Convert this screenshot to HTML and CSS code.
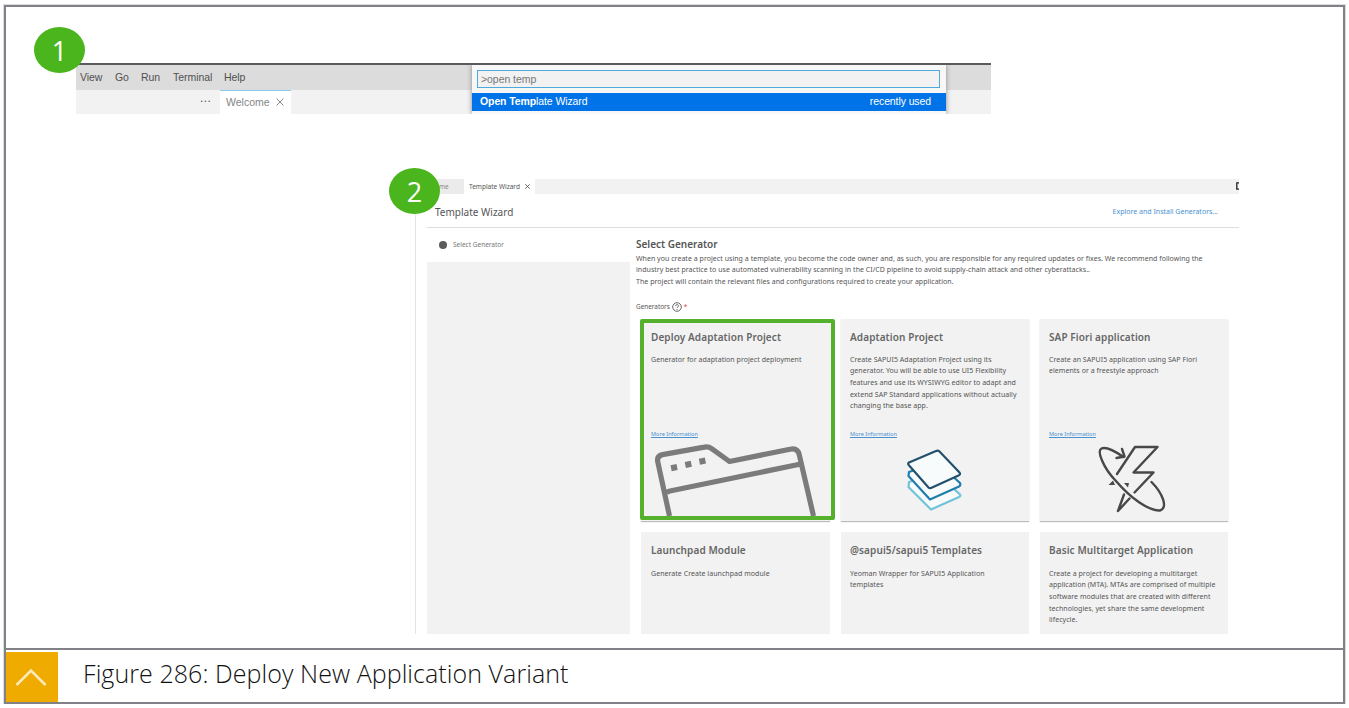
FILE: index.html
```
<!DOCTYPE html>
<html lang="en">
<head>
<meta charset="utf-8">
<title>Deploy New Application Variant</title>
<link rel="stylesheet" href="styles.css">
</head>
<body>
<figure class="frame">
  <div class="stage">
    <section class="ide">
      <span class="badge badge-one">1</span>
      <nav class="menubar"><span class="m-view">View</span><span class="m-go">Go</span><span class="m-run">Run</span><span class="m-term">Terminal</span><span class="m-help">Help</span></nav>
      <div class="tabs">
        <span class="dots">•••</span>
        <span class="tab"><span>Welcome</span><svg width="8" height="8" viewBox="0 0 8 8"><path d="M.6.6l6.8 6.8M7.4.6L.6 7.4" stroke="#858585" fill="none"/></svg></span>
      </div>
      <div class="palette">
        <div class="query">&gt;open temp</div>
        <div class="option"><span><b>Open Temp</b>late Wizard</span><span>recently used</span></div>
      </div>
    </section>

    <section class="wizard">
      <span class="badge badge-two">2</span>
      <div class="wtabs">
        <span class="wtab-old">me</span>
        <span class="wtab"><span>Template Wizard</span><svg width="5" height="5" viewBox="0 0 5 5"><path d="M.3.3l4.4 4.4M4.7.3L.3 4.7" stroke="#444" stroke-width=".8" fill="none"/></svg></span>
        <svg class="split" width="3" height="8" viewBox="0 0 3 8"><path d="M3 .8H.8v6.4H3" stroke="#222" stroke-width="1.3" fill="none"/></svg>
      </div>
      <header class="whead"><h1>Template Wizard</h1><a>Explore and Install Generators...</a></header>
      <div class="wbody">
        <aside class="side">
          <div class="step"><i></i><span>Select Generator</span></div>
          <div class="fill"></div>
        </aside>
        <main class="main">
          <h2>Select Generator</h2>
          <p class="intro">When you create a project using a template, you become the code owner and, as such, you are responsible for any required updates or fixes. We recommend following the<br>industry best practice to use automated vulnerability scanning in the CI/CD pipeline to avoid supply-chain attack and other cyberattacks..<br>The project will contain the relevant files and configurations required to create your application.</p>
          <div class="label"><span>Generators</span><svg width="10" height="10" viewBox="0 0 10 10"><circle cx="5" cy="5" r="4.3" fill="none" stroke="#555" stroke-width=".9"/><path d="M3.6 4.1c0-2 2.9-1.9 2.9-.2 0 1.1-1.5 1.1-1.5 2.2M5 7v.9" fill="none" stroke="#555" stroke-width=".9"/></svg><em>*</em></div>
          <div class="cards">
            <article class="card selected">
              <h3>Deploy Adaptation Project</h3>
              <p>Generator for adaptation project deployment</p>
              <a>More Information</a>
              <svg class="art" width="189" height="202" viewBox="641 319 189 202"><g fill="none" stroke="#7b7b7b" stroke-width="5.2" stroke-linejoin="round"><path d="M669.5 516L657.8 462Q656.5 456 662.5 454.6L703 447.4Q708 446 712 448.8L729.5 461.5L790 449.2Q797.5 447.5 799.2 454.5L813.500 516"/><path d="M666.5 492.500Q668 491.500 670 491L796 465Q799 464 801 464.5"/></g><g fill="#7b7b7b"><path d="M670.5 465.3l6-1.2 1.2 6-6 1.2zM684.7 462l6-1.2 1.2 6-6 1.2zM698.8 458.8l6-1.2 1.2 6-6 1.2z"/></g></svg>
            </article>
            <article class="card">
              <h3>Adaptation Project</h3>
              <p>Create SAPUI5 Adaptation Project using its<br>generator. You will be able to use UI5 Flexibility<br>features and use its WYSIWYG editor to adapt and<br>extend SAP Standard applications without actually<br>changing the base app.</p>
              <a>More Information</a>
              <svg class="art" width="188" height="202" viewBox="841 319 188 202"><g fill="#f8fbfc" stroke-width="2.2" stroke-linejoin="round"><path stroke="#70c3d8" d="M909 482L937 473L960 494.5Q961 496 959 497L931 509.5L908.5 487Z"/><path stroke="#207dac" d="M909 472L937 462L960 483Q961 485.5 959 486.5L930 499.5L908.5 476Z"/><path stroke="#22506d" d="M909 462.5L936 451Q938 450 939.5 451.5L959.5 472.5Q961 474.5 958.5 475.5L931 488Q929.5 488.5 928.5 487.5L908.7 465Q907.5 463.5 909 462.5Z"/></g></svg>
            </article>
            <article class="card">
              <h3>SAP Fiori application</h3>
              <p>Create an SAPUI5 application using SAP Fiori<br>elements or a freestyle approach</p>
              <a>More Information</a>
              <svg class="art" width="188" height="202" viewBox="1039.500 319 188 202"><g fill="none" stroke="#484848" stroke-width="2.4" stroke-linecap="round" stroke-linejoin="round"><path d="M1116.5 474L1134.5 447H1157L1133 472.5H1153L1134 492.5"/><path d="M1123.5 494.5L1117.5 511L1129 498.5"/><path d="M1123 457Q1107 446 1101 448.5C1096 451 1103 468 1115 480.5C1130 498 1148 511 1159.500 510.500C1168 508 1162 493 1151 482"/><path d="M1121.500 449L1124 456.500L1116 458"/></g><path fill="#484848" d="M1108 485l4.500-4.500 2 4.500zM1123.500 483h5l-1 4.500z"/></svg>
            </article>
            <article class="card short">
              <h3>Launchpad Module</h3>
              <p>Generate Create launchpad module</p>
            </article>
            <article class="card short">
              <h3>@sapui5/sapui5 Templates</h3>
              <p>Yeoman Wrapper for SAPUI5 Application<br>templates</p>
            </article>
            <article class="card short">
              <h3>Basic Multitarget Application</h3>
              <p>Create a project for developing a multitarget<br>application (MTA). MTAs are comprised of multiple<br>software modules that are created with different<br>technologies, yet share the same development<br>lifecycle.</p>
            </article>
          </div>
        </main>
      </div>
    </section>
  </div>
  <figcaption><span class="up"><svg width="52" height="50" viewBox="0 0 52 50"><path d="M10.500 33L25 18.500L39.500 33" fill="none" stroke="#fce9b8" stroke-width="2.600"/></svg></span><span class="caption">Figure 286: Deploy New Application Variant</span></figcaption>
</figure>
</body>
</html>
```
FILE: styles.css
```
*, *::after { box-sizing: border-box; }
body { margin: 0; background: #fff; overflow: hidden; font-family: "Noto Sans", sans-serif; color: #555; }
h1, h2, h3, p, figure { margin: 0; font-weight: 400; }
svg { display: block; flex: none; }
.frame { width: 1341px; height: 699px; margin: 5px 0 0 4px; border: 2px solid #828187; box-shadow: 0 0 0 1px #dcdce0; display: flex; flex-direction: column; white-space: nowrap; }
.stage { height: 643px; flex: none; border-bottom: 2px solid #828187; padding: 56px 0 0 70px; }

.badge { position: absolute; z-index: 2; width: 51px; height: 46px; border-radius: 50%; background: #4ab51c; color: #fff; font: 27px/47px "Open Sans", sans-serif; text-align: center; }
.badge-one { left: -42px; top: -38px; }
.badge-two { left: -27px; top: -11px; }

.ide { position: relative; width: 915px; height: 51px; border-top: 2px solid #5b595e; font: 10.500px/24px "Liberation Sans", sans-serif; color: #505050; }
.menubar { height: 25px; background: #dcdcdc; padding-left: 4px; display: flex; line-height: 24px; letter-spacing: -.05px; }
.m-view { width: 35px; } .m-go { width: 26px; } .m-run { width: 32px; } .m-term { width: 51px; }
.tabs { height: 24px; background: #f2f2f2; display: flex; }
.dots { width: 144px; padding: 0 8px 0 0; text-align: right; font-size: 5px; letter-spacing: 2px; line-height: 23px; }
.tab { width: 71px; background: #fff; border-top: 1px solid #8ccaea; display: flex; align-items: center; gap: 6px; padding: 0 0 1px 6px; color: #858585; }
.palette { position: absolute; left: 396px; top: 0; width: 474px; height: 49px; background: #f7f7f7; box-shadow: 0 0 5px #888; clip-path: inset(0 -6px 0 -6px); padding-top: 5px; }
.query { margin: 0 6px 5px 5px; height: 18px; border: 1px solid #4fa9dc; background: #f2f2f2; line-height: 16px; padding-left: 3px; color: #777; letter-spacing: -.05px; }
.option { height: 18px; background: #0073e8; color: #fff; line-height: 17px; display: flex; justify-content: space-between; padding: 0 15px 0 8px; letter-spacing: -.1px; }

.wizard { position: relative; margin: 65px 0 0 339px; width: 824px; height: 455px; padding-left: 11px; border-left: 1px solid #e4e4e4; }
.wtabs { height: 15px; background: #f2f2f2; display: flex; align-items: center; font-size: 6.500px; }
.wtab-old { width: 37px; height: 15px; padding-left: 12px; background: #ebebeb; line-height: 15px; color: #888; }
.wtab { width: 71px; height: 15px; background: #fff; display: flex; align-items: center; gap: 5px; padding-left: 5px; line-height: 14px; }
.split { margin: 0 0 2px auto; }
.whead { height: 34px; border-bottom: 1px solid #ddd; display: flex; justify-content: space-between; align-items: center; padding: 2px 21px 0 8px; }
h1 { font-size: 10px; }
.whead a { font-size: 7px; color: #4a91d0; }
.wbody { display: flex; height: 406px; }
.side { width: 203px; display: flex; flex-direction: column; }
.step { height: 34px; display: flex; align-items: center; gap: 6px; padding: 0 0 1px 12px; font-size: 6.500px; color: #777; }
.step i { width: 8px; height: 8px; border-radius: 50%; background: #5b5b5b; }
.fill { flex: 1; background: #f2f2f2; }
.main { padding: 8px 0 0 6px; }
h2 { font-size: 10px; line-height: 16px; font-weight: 600; }
.intro { font-size: 7px; line-height: 11.600px; letter-spacing: .038px; padding-top: .5px; }
.label { height: 12px; margin-top: 13.500px; display: flex; align-items: center; gap: 2px; font-size: 6.400px; }
.label em { font-style: normal; color: #e04040; }
.cards { margin: 6px 0 0 5px; display: grid; grid-template-columns: 189px 188px 188px; grid-template-rows: 202px 102px; column-gap: 11px; row-gap: 11px; }
.card { position: relative; background: #f2f2f2; box-shadow: 0 1px 1px #bbb; padding: 11px 0 0 9px; }
.card:first-child, .card:nth-child(4) { padding-left: 10px; }
.short { box-shadow: none; }
h3 { font-size: 10px; line-height: 15px; font-weight: 600; color: #666; letter-spacing: .1px; }
.card p { margin-top: 9px; height: 76px; font-size: 7px; line-height: 11.600px; letter-spacing: .045px; }
.short p { margin-top: 10px; }
.card a { display: block; font-size: 5.600px; line-height: 9px; color: #4a91d0; text-decoration: underline; }
.art { position: absolute; left: 0; top: 0; }
.selected::after { content: ""; position: absolute; left: -1px; top: 0; width: 195px; height: 201px; border: 4px solid #55b02c; border-radius: 2px; }

figcaption { flex: 1; display: flex; align-items: flex-end; }
.up { width: 52px; height: 50px; background: #f0ab00; }
.caption { height: 50px; margin-left: 25px; font: 300 25px/43px "Open Sans", sans-serif; letter-spacing: .07px; color: #111; }
```
